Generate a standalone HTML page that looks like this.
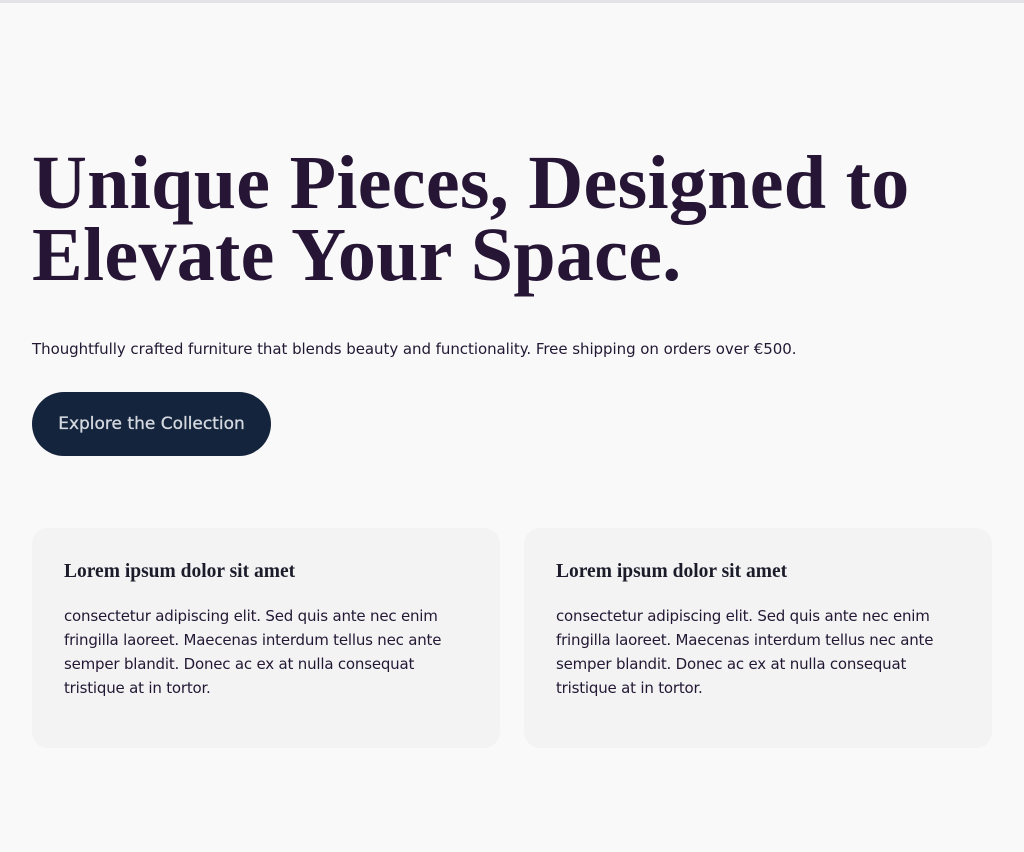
<!DOCTYPE html>
<html><head><meta charset="utf-8"><style>
html,body{margin:0;padding:0;background:#f9f9f9;width:1024px;height:852px;overflow:hidden}
body{border-top:3px solid #e4e4e6;box-sizing:border-box;font-family:"DejaVu Sans","Liberation Sans",sans-serif;color:#221833}
h1{position:absolute;left:32px;top:147px;margin:0;font-family:"Liberation Serif",serif;font-weight:bold;font-size:76px;line-height:72px;color:#261535;letter-spacing:0.3px;width:980px}
p.lead{position:absolute;left:32px;top:338px;margin:0;font-size:15px;line-height:22px;color:#221833;letter-spacing:-0.05px}
.btn{position:absolute;left:32px;top:392px;width:239px;height:64px;border-radius:32px;background:#14243d;color:#d4d8df;font-size:17px;font-weight:500;line-height:64px;text-align:center;letter-spacing:0px;-webkit-text-stroke:0.3px #d4d8df}
.card{position:absolute;top:528px;width:468px;height:220px;background:#f3f3f4;border-radius:16px;box-sizing:border-box;padding:32px 32px}
.card h3{margin:0;font-family:"Liberation Serif",serif;font-weight:bold;font-size:19.5px;line-height:24px;color:#1b1b2a}
.card p{margin:20px 0 0;font-size:15px;line-height:24px;color:#221833;letter-spacing:-0.2px}
</style></head><body>
<h1>Unique Pieces, Designed to Elevate Your Space.</h1>
<p class="lead">Thoughtfully crafted furniture that blends beauty and functionality. Free shipping on orders over €500.</p>
<div class="btn">Explore the Collection</div>
<div class="card" style="left:32px"><h3>Lorem ipsum dolor sit amet</h3><p>consectetur adipiscing elit. Sed quis ante nec enim fringilla laoreet. Maecenas interdum tellus nec ante semper blandit. Donec ac ex at nulla consequat tristique at in tortor.</p></div>
<div class="card" style="left:524px"><h3>Lorem ipsum dolor sit amet</h3><p>consectetur adipiscing elit. Sed quis ante nec enim fringilla laoreet. Maecenas interdum tellus nec ante semper blandit. Donec ac ex at nulla consequat tristique at in tortor.</p></div>
</body></html>
